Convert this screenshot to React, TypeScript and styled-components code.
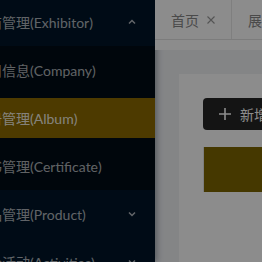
import React from "react";
import styled, { createGlobalStyle } from "styled-components";

const Global = createGlobalStyle`
  html, body { margin: 0; padding: 0; height: 100%; overflow: hidden; background: #f0f2f5; }
  #root { height: 100%; }
  * { box-sizing: border-box; }
`;

const FONT = `Lato, "Noto Sans CJK SC", sans-serif`;

const Layout = styled.div`
  display: flex;
  height: 100%;
  width: 1200px;
  margin-left: -74px;
  font-family: ${FONT};
  font-size: 14px;
`;

const Sider = styled.aside`
  flex: 0 0 229px;
  background: #001529;
  position: relative;
  z-index: 2;
  box-shadow: 2px 0 6px rgba(0, 21, 41, 0.35);
  overflow: hidden;
`;

const Menu = styled.ul`
  list-style: none;
  display: flex;
  flex-direction: column;
  margin: -2px 0 0;
  padding: 0;
`;

const SubMenu = styled.li`
  list-style: none;
  display: flex;
  flex-direction: column;
`;

const SubItem = styled.li`
  list-style: none;
  display: flex;
  flex-direction: column;
`;

const ItemRow = styled.div<{ $selected?: boolean }>`
  position: relative;
  height: 40px;
  line-height: 40px;
  margin: 4px 0;
  padding-left: 48px;
  padding-top: 1px;
  white-space: nowrap;
  color: ${(p) => (p.$selected ? "rgba(255,255,255,0.9)" : "rgba(255,255,255,0.7)")};
  background: ${(p) => (p.$selected ? "#8c6b00" : "transparent")};
`;

const SubList = styled.ul`
  list-style: none;
  display: flex;
  flex-direction: column;
  margin: 0;
  padding: 0;
  background: #000c17;
`;

const Arrow = styled.svg`
  position: absolute;
  right: 18px;
  top: 50%;
  width: 10px;
  height: 10px;
  margin-top: -5px;
`;

const Chevron = ({ up }: { up?: boolean }) => (
  <Arrow viewBox="0 0 10 10">
    <path
      d={up ? "M2 6.5 L5 3.5 L8 6.5" : "M2 3.5 L5 6.5 L8 3.5"}
      fill="none"
      stroke="rgba(255,255,255,0.7)"
      strokeWidth="1.5"
    />
  </Arrow>
);

const Main = styled.div`
  flex: 1;
  display: flex;
  flex-direction: column;
  min-width: 0;
`;

const TabBarWrap = styled.div`
  position: relative;
  z-index: 3;
  background: #fff;
  padding-bottom: 10px;
`;

const Tabs = styled.div`
  display: flex;
  height: 40px;
  border-bottom: 1px solid #e2e2e2;
`;

const Tab = styled.div`
  display: flex;
  align-items: center;
  gap: 8px;
  padding: 0 16px;
  border-right: 1px solid #e8e8e8;
  color: #888;
  white-space: nowrap;
`;

const CloseIcon = styled.svg`
  width: 8px;
  height: 8px;
  flex: none;
`;

const Content = styled.div`
  padding: 24px;
  flex: 1;
`;

const Card = styled.div`
  background: #fff;
  padding: 24px;
  height: 400px;
`;

const Button = styled.button`
  display: inline-flex;
  align-items: center;
  gap: 8px;
  height: 32px;
  padding: 0 15px;
  border: none;
  border-radius: 4px;
  background: #262626;
  color: #fff;
  font-family: ${FONT};
  font-size: 14px;
  white-space: nowrap;
`;

const Table = styled.div`
  margin-top: 17px;
  border-left: 1px solid #e4e4e4;
`;

const TableHead = styled.div`
  height: 45px;
  background: #7f6600;
`;

const Overlay = styled.div`
  position: fixed;
  inset: 0;
  background: rgba(0, 0, 0, 0.45);
  z-index: 10;
`;

export default function App() {
  return (
    <>
      <Global />
      <Layout>
        <Sider>
          <Menu>
            <SubMenu>
              <ItemRow>
                展商管理(Exhibitor)
                <Chevron up />
              </ItemRow>
              <SubList>
                <SubItem><ItemRow>公司信息(Company)</ItemRow></SubItem>
                <SubItem><ItemRow $selected>图册管理(Album)</ItemRow></SubItem>
                <SubItem><ItemRow>证书管理(Certificate)</ItemRow></SubItem>
              </SubList>
            </SubMenu>
            <SubMenu>
              <ItemRow>
                产品管理(Product)
                <Chevron />
              </ItemRow>
            </SubMenu>
            <SubMenu>
              <ItemRow>
                展会活动(Activities)
                <Chevron />
              </ItemRow>
            </SubMenu>
          </Menu>
        </Sider>
        <Main>
          <TabBarWrap>
            <Tabs>
              <Tab>
                首页
                <CloseIcon viewBox="0 0 8 8">
                  <path d="M0.5 0.5 L7.5 7.5 M7.5 0.5 L0.5 7.5" stroke="#999" strokeWidth="1.1" />
                </CloseIcon>
              </Tab>
              <Tab>展商图册</Tab>
            </Tabs>
          </TabBarWrap>
          <Content>
            <Card>
              <Button>
                <svg width="14" height="14" viewBox="0 0 14 14">
                  <path d="M7 1 V13 M1 7 H13" stroke="#fff" strokeWidth="1.6" />
                </svg>
                新增
              </Button>
              <Table>
                <TableHead />
              </Table>
            </Card>
          </Content>
        </Main>
      </Layout>
      <Overlay />
    </>
  );
}
